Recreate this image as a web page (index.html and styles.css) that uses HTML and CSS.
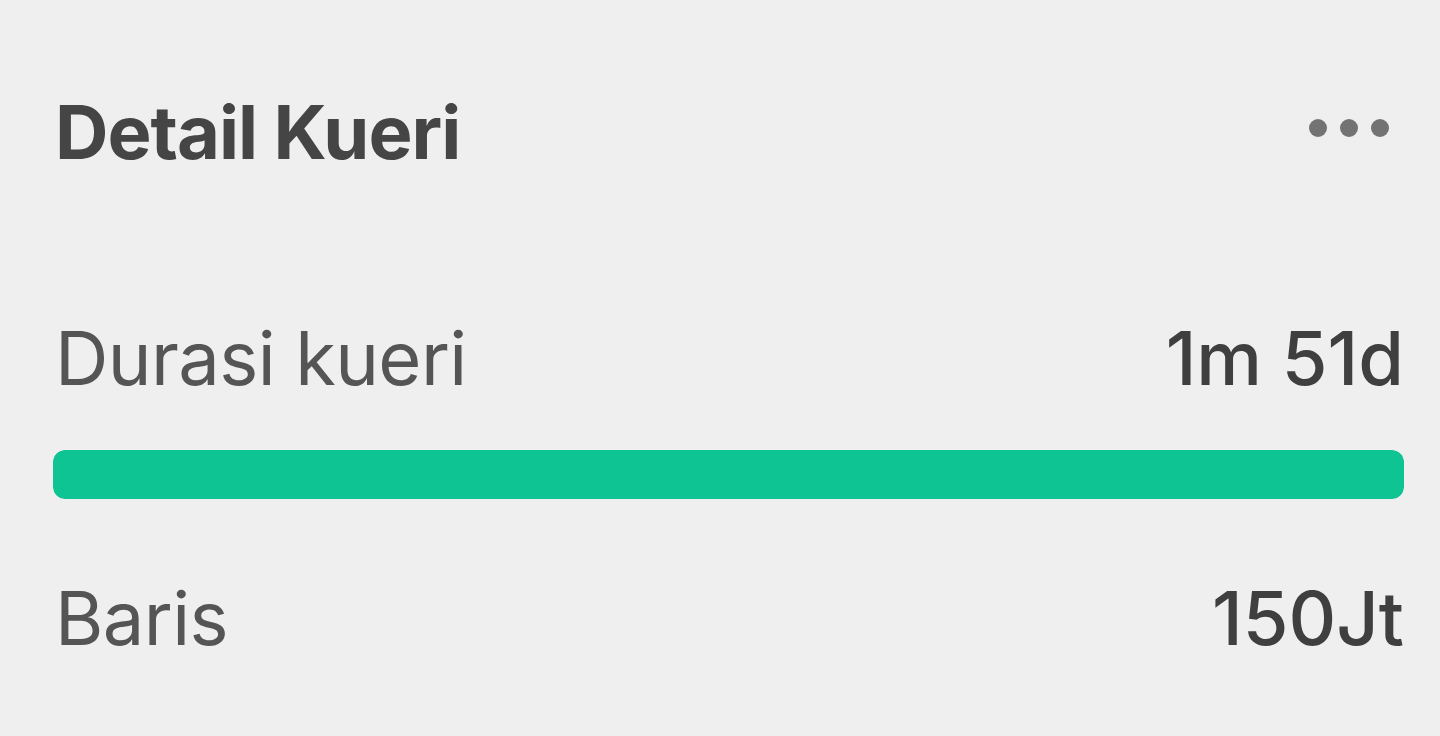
FILE: index.html
```html
<!DOCTYPE html>
<html lang="id">
<head>
<meta charset="utf-8">
<title>Detail Kueri</title>
<link rel="stylesheet" href="styles.css">
</head>
<body>
<main class="panel">
  <header class="panel-header">
    <h1 class="panel-title">Detail Kueri</h1>
    <div class="more" aria-label="Lainnya">
      <span class="dot"></span><span class="dot"></span><span class="dot"></span>
    </div>
  </header>
  <div class="row row-first">
    <span class="label">Durasi kueri</span>
    <span class="value">1m 51d</span>
  </div>
  <div class="bar"><div class="bar-fill" style="width:100%"></div></div>
  <div class="row row-last">
    <span class="label">Baris</span>
    <span class="value">150Jt</span>
  </div>
</main>
</body>
</html>
```

FILE: styles.css
```css
html, body {
  margin: 0;
  padding: 0;
  background: #efefef;
}
body {
  font-family: Inter, "Noto Sans", sans-serif;
  width: 1440px;
  height: 736px;
  overflow: hidden;
}
.panel {
  padding: 87px 36px 0 53px;
  display: flex;
  flex-direction: column;
}
.panel-header {
  display: flex;
  justify-content: space-between;
  align-items: flex-start;
}
.panel-title {
  margin: 0;
  font-size: 74px;
  line-height: 90px;
  font-weight: 700;
  color: #454545;
  padding-left: 2px;
  letter-spacing: -1px;
}
.more {
  display: flex;
  gap: 13px;
  margin-top: 32px;
  margin-right: 15px;
}
.dot {
  width: 18px;
  height: 18px;
  border-radius: 50%;
  background: #737373;
}
.row {
  display: flex;
  justify-content: space-between;
  font-size: 74px;
  line-height: 90px;
}
.row-first {
  margin-top: 136px;
}
.row-last {
  margin-top: 74px;
}
.label {
  color: #555555;
  font-weight: 400;
  padding-left: 2px;
  letter-spacing: -0.6px;
}
.value {
  color: #3f3f3f;
  font-weight: 500;
}
.bar {
  margin-top: 47px;
  height: 49px;
  border-radius: 12px;
  background: #e2e2e2;
  overflow: hidden;
}
.bar-fill {
  height: 100%;
  background: #0dc492;
  border-radius: 12px;
}
```
